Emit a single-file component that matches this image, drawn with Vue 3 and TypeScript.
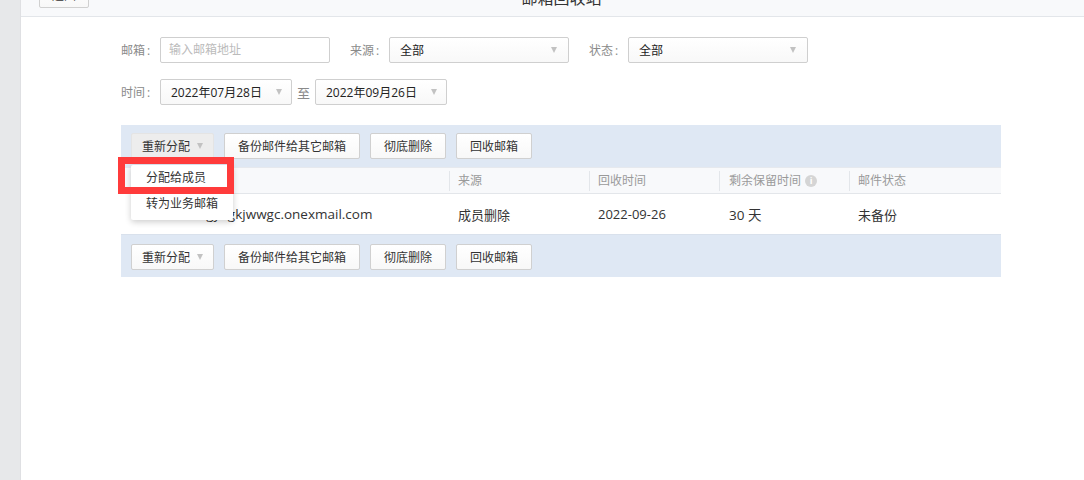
<script setup lang="ts">
const actions = ['备份邮件给其它邮箱', '彻底删除', '回收邮箱']
const columns = [
  { label: '来源', cls: 'c-src' },
  { label: '回收时间', cls: 'c-time' },
  { label: '剩余保留时间', cls: 'c-left', info: true },
  { label: '邮件状态', cls: 'c-state' },
]
</script>

<template>
  <div class="page">
    <aside class="rail"></aside>
    <main class="main">
      <header class="head">
        <button class="btn back">返回</button>
        <div class="title">邮箱回收站</div>
      </header>
      <section class="filters">
        <div class="f-row">
          <label class="lab">邮箱<span class="colon">:</span></label>
          <div class="input">输入邮箱地址</div>
          <label class="lab l2">来源<span class="colon">:</span></label>
          <div class="sel s-wide"><span>全部</span><i class="tri"></i></div>
          <label class="lab l3">状态<span class="colon">:</span></label>
          <div class="sel s-wide"><span>全部</span><i class="tri"></i></div>
        </div>
        <div class="f-row r2">
          <label class="lab">时间<span class="colon">:</span></label>
          <div class="sel s-date"><span>2022年07月28日</span><i class="tri"></i></div>
          <span class="to">至</span>
          <div class="sel s-date"><span>2022年09月26日</span><i class="tri"></i></div>
        </div>
      </section>
      <section class="table">
        <div class="bar">
          <button class="btn drop open">重新分配<i class="tri"></i></button>
          <button v-for="a in actions" :key="a" class="btn">{{ a }}</button>
        </div>
        <div class="thead">
          <div class="c-mail"></div>
          <div v-for="c in columns" :key="c.label" class="th" :class="c.cls">
            {{ c.label }}<i v-if="c.info" class="info">i</i>
          </div>
        </div>
        <div class="row">
          <span class="check"></span>
          <div class="c-mail mail">wangyagkjwwgc.onexmail.com</div>
          <div class="c-src">成员删除</div>
          <div class="c-time">2022-09-26</div>
          <div class="c-left days">30 天</div>
          <div class="c-state">未备份</div>
        </div>
        <div class="bar bar-low">
          <button class="btn drop">重新分配<i class="tri"></i></button>
          <button v-for="a in actions" :key="a" class="btn">{{ a }}</button>
        </div>
        <div class="menu">
          <div class="item">分配给成员</div>
          <div class="item">转为业务邮箱</div>
        </div>
        <div class="mark"></div>
      </section>
    </main>
  </div>
</template>

<style>
html, body { margin: 0; background: #fff; overflow: hidden; }
</style>

<style scoped>
.page {
  display: flex;
  height: 480px;
  overflow: hidden;
  font-family: "Open Sans", "Noto Sans CJK SC", sans-serif;
  font-size: 12px;
  color: #222;
}
.rail { width: 20px; flex: none; background: #e7e8ea; border-right: 1px solid #dfe0e3; }
.main { flex: 1; min-width: 0; }
.head {
  height: 50px;
  margin-top: -34px;
  position: relative;
  background: #f8f9fb;
  border-bottom: 1px solid #e3e6ea;
  display: flex;
  align-items: center;
  justify-content: center;
}
.title { font-size: 16px; color: #333; padding: 12px 0 0 18px; }
.filters { padding: 20px 0 0 100px; }
.f-row { display: flex; align-items: center; height: 26px; }
.r2 { margin-top: 16px; }
.lab { color: #8a8a8a; width: 39px; flex: none; }
.colon { margin-left: 2px; }
.l2 { margin-left: 20px; }
.l3 { margin-left: 20px; }
.input {
  box-sizing: border-box;
  width: 170px;
  height: 26px;
  line-height: 24px;
  padding-left: 8px;
  border: 1px solid #cfcfcf;
  border-radius: 2px;
  color: #bbb;
  background: #fff;
}
.sel {
  box-sizing: border-box;
  height: 26px;
  display: flex;
  align-items: center;
  justify-content: space-between;
  border: 1px solid #cfcfcf;
  border-radius: 2px;
  background: linear-gradient(#fff, #f8f8f8);
  color: #222;
}
.s-wide { width: 180px; padding: 0 11px 0 10px; }
.s-date { width: 132px; padding: 0 9px 0 10px; }
.to { width: 23px; text-align: center; color: #8a8a8a; font-size: 13px; }
.tri {
  display: inline-block;
  width: 0;
  height: 0;
  border-left: 3px solid transparent;
  border-right: 3px solid transparent;
  border-top: 6px solid #c2c2c2;
}
.table { position: relative; width: 880px; margin: 20px 0 0 100px; }
.bar {
  height: 42px;
  box-sizing: border-box;
  background: #dfe8f4;
  display: flex;
  align-items: center;
  gap: 10px;
  padding-left: 10px;
}
.bar-low { height: 43px; padding-top: 1px; border-top: 1px solid #d9e1ec; }
.btn {
  box-sizing: border-box;
  height: 26px;
  padding: 0 13px;
  border: 1px solid #d0d0d0;
  border-radius: 2px;
  background: linear-gradient(#fff, #f8f8f8);
  color: #333;
  font: inherit;
  display: inline-flex;
  align-items: center;
  justify-content: center;
  white-space: nowrap;
}
.back { position: absolute; left: 18px; top: 16px; width: 50px; padding: 0; }
.drop { width: 83px; justify-content: space-between; padding: 0 10px; }
.open { background: #ededed; border-color: #e4e4e4; }
.thead {
  display: flex;
  align-items: center;
  height: 27px;
  padding-top: 1px;
  box-sizing: border-box;
  background: #f8f9fb;
  border-top: 1px solid #e6e9ee;
  border-bottom: 1px solid #e3e6ea;
  color: #9a9a9a;
}
.c-mail { width: 328px; flex: none; box-sizing: border-box; }
.c-src { width: 140px; flex: none; padding-left: 9px; box-sizing: border-box; }
.c-time { width: 130px; flex: none; padding-left: 9px; box-sizing: border-box; }
.c-left { width: 130px; flex: none; padding-left: 9px; box-sizing: border-box; }
.c-state { flex: 1; padding-left: 9px; box-sizing: border-box; }
.th { height: 20px; line-height: 20px; border-left: 1px solid #e3e6ea; display: flex; align-items: center; padding-left: 8px; }
.th.c-left { padding-left: 9px; }
.info {
  width: 12px;
  height: 12px;
  margin-left: 4px;
  border-radius: 50%;
  background: #d5d5d5;
  color: #fff;
  font-size: 9px;
  font-style: normal;
  font-weight: 700;
  line-height: 12px;
  text-align: center;
}
.row {
  position: relative;
  display: flex;
  align-items: center;
  height: 40px;
  font-size: 13px;
  color: #333;
  box-sizing: border-box;
}
.mail { font-size: 13.5px; padding-left: 59px; white-space: nowrap; }
.days { padding-left: 10px; font-size: 13.5px; }
.check {
  position: absolute;
  left: 11px;
  top: 12px;
  width: 14px;
  height: 14px;
  box-sizing: border-box;
  border: 1px solid #c4c4c4;
  border-radius: 2px;
}
.menu {
  position: absolute;
  left: 10px;
  top: 40px;
  width: 102px;
  padding-bottom: 3px;
  background: #fff;
  box-shadow: 0 2px 6px rgba(0, 0, 0, .2);
  border-radius: 2px;
  color: #333;
  z-index: 2;
}
.item { height: 26px; line-height: 26px; padding-left: 15px; }
.mark {
  position: absolute;
  left: -3px;
  top: 32px;
  width: 116px;
  height: 37px;
  box-sizing: border-box;
  border: 7px solid #ff3b3b;
  z-index: 3;
}
</style>
